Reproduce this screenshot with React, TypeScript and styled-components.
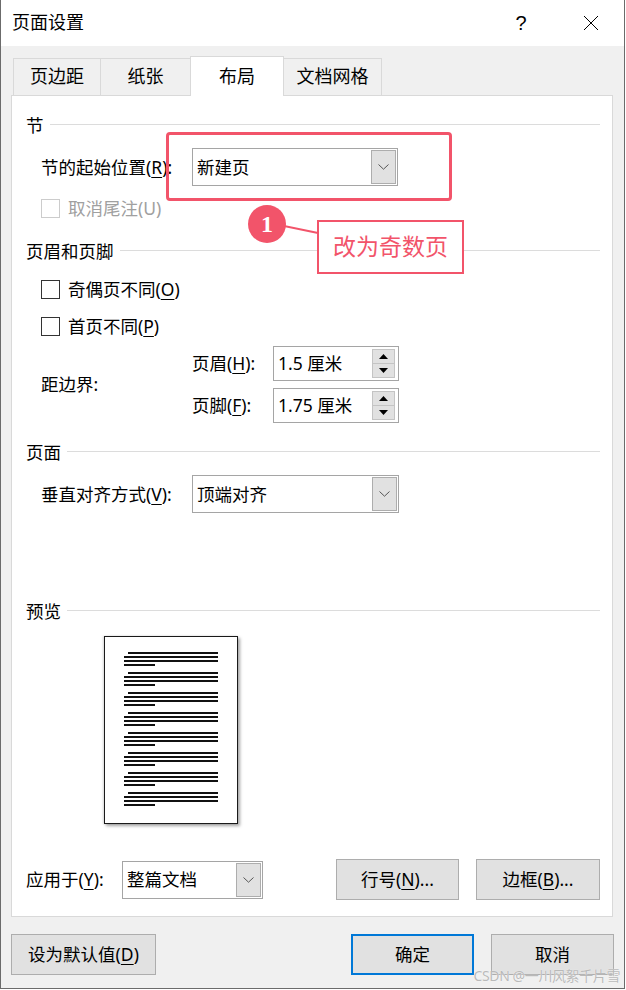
import React from 'react';
import styled, { createGlobalStyle } from 'styled-components';

const GlobalStyle = createGlobalStyle`
  html, body {
    margin: 0;
    padding: 0;
    background: #fff;
  }
  body {
    font-family: "Noto Sans", "Noto Sans CJK SC", sans-serif;
  }
`;

const RED = '#f2546a';

const Window = styled.div`
  position: relative;
  width: 625px;
  height: 989px;
  box-sizing: border-box;
  border: 1px solid #6b6b6b;
  border-top: none;
  background: #f0f0f0;
  color: #000;
  font-size: 17.5px;
  line-height: 1.2;
  display: flex;
  flex-direction: column;
`;

const TitleBar = styled.div`
  height: 46px;
  flex-shrink: 0;
  background: #fff;
  display: flex;
  align-items: center;
  padding-left: 11px;
  padding-right: 10px;
`;

const TitleText = styled.div`
  flex: 1;
  font-size: 18px;
`;

const TitleButton = styled.div`
  width: 46px;
  height: 46px;
  display: flex;
  align-items: center;
  justify-content: center;
  font-size: 20px;
  font-family: "Liberation Sans", sans-serif;
  & + & {
    margin-left: 24px;
  }
`;

const TabStrip = styled.div`
  height: 49px;
  flex-shrink: 0;
  display: flex;
  align-items: flex-end;
  padding-left: 12px;
`;

const Tab = styled.div<{ $w: number; $active?: boolean }>`
  position: relative;
  box-sizing: border-box;
  width: ${(p) => p.$w}px;
  height: ${(p) => (p.$active ? 40 : 37)}px;
  margin-bottom: ${(p) => (p.$active ? -1 : 0)}px;
  z-index: ${(p) => (p.$active ? 2 : 0)};
  border: 1px solid #d9d9d9;
  border-bottom: none;
  background: ${(p) => (p.$active ? '#fff' : '#f0f0f0')};
  display: flex;
  align-items: center;
  justify-content: center;
  font-size: 18px;
  & + & {
    margin-left: -1px;
  }
`;

const Panel = styled.div`
  position: relative;
  box-sizing: border-box;
  height: 822px;
  margin: 0 11px 0 10px;
  border: 1px solid #d9d9d9;
  background: #fff;
  padding: 17px 12px 0 14px;
  display: flex;
  flex-direction: column;
`;

const GroupHeader = styled.div<{ $mt?: number }>`
  height: 24px;
  margin-top: ${(p) => p.$mt ?? 0}px;
  display: flex;
  align-items: center;
  gap: 6px;
  &::after {
    content: '';
    flex: 1;
    height: 1px;
    background: #dcdcdc;
    margin-top: -1px;
  }
`;

const FieldRow = styled.div<{ $mt: number }>`
  display: flex;
  align-items: center;
  margin-top: ${(p) => p.$mt}px;
  padding-left: 15px;
`;

const FieldLabel = styled.div<{ $w: number }>`
  width: ${(p) => p.$w}px;
  flex-shrink: 0;
`;

const Key = styled.span`
  text-decoration: underline;
  text-underline-offset: 3px;
  text-decoration-thickness: 1px;
`;

const Combo = styled.div<{ $w: number }>`
  box-sizing: border-box;
  width: ${(p) => p.$w}px;
  height: 38px;
  border: 1px solid #a5a5a5;
  background: #fff;
  padding: 1px 1px 1px 4px;
  display: flex;
  align-items: stretch;
`;

const ComboValue = styled.div`
  flex: 1;
  display: flex;
  align-items: center;
`;

const ComboArrow = styled.div`
  box-sizing: border-box;
  width: 25px;
  background: #e1e1e1;
  border: 1px solid #adadad;
  display: flex;
  align-items: center;
  justify-content: center;
`;

const CheckRow = styled.div<{ $mt: number }>`
  height: 22px;
  margin-top: ${(p) => p.$mt}px;
  padding-left: 15px;
  display: flex;
  align-items: center;
  gap: 8px;
`;

const CheckBox = styled.div<{ $disabled?: boolean }>`
  box-sizing: border-box;
  width: 19px;
  height: 19px;
  border: 1px solid ${(p) => (p.$disabled ? '#cccccc' : '#333333')};
  background: #fff;
`;

const CheckLabel = styled.span<{ $disabled?: boolean }>`
  color: ${(p) => (p.$disabled ? '#a0a0a0' : '#000')};
`;

const MarginGrid = styled.div`
  margin-top: 9px;
  padding-left: 15px;
  display: grid;
  grid-template-columns: 151px 81px 126px;
  grid-template-rows: 35px 35px;
  row-gap: 7px;
  align-items: center;
`;

const MarginLabel = styled.div`
  grid-row: 1 / span 2;
  align-self: center;
`;

const SpinBox = styled.div`
  box-sizing: border-box;
  height: 35px;
  border: 1px solid #a5a5a5;
  background: #fff;
  padding: 2px 3px 2px 4px;
  display: flex;
`;

const SpinValue = styled.div`
  flex: 1;
  display: flex;
  align-items: center;
`;

const SpinButtons = styled.div`
  width: 23px;
  display: flex;
  flex-direction: column;
`;

const SpinButton = styled.div`
  flex: 1;
  box-sizing: border-box;
  background: #e1e1e1;
  border: 1px solid #c4c4c4;
  display: flex;
  align-items: center;
  justify-content: center;
  & + & {
    border-top: none;
  }
`;

const PreviewPage = styled.div`
  box-sizing: border-box;
  width: 134px;
  height: 188px;
  margin: 13px 0 0 78px;
  border: 1px solid #1a1a1a;
  background: #fff;
  box-shadow: 2px 2px 3px rgba(0, 0, 0, 0.35), -1px 0 2px rgba(0, 0, 0, 0.15);
  padding: 15px 0 0 19px;
  display: flex;
  flex-direction: column;
  gap: 6px;
`;

const PreviewGroup = styled.div`
  display: flex;
  flex-direction: column;
  gap: 2px;
`;

const PreviewLine = styled.div<{ $indent?: number; $w: number }>`
  height: 2px;
  width: ${(p) => p.$w}px;
  margin-left: ${(p) => p.$indent ?? 0}px;
  background: #111;
`;

const ApplyRow = styled.div`
  margin-top: 35px;
  height: 41px;
  display: flex;
  align-items: center;
`;

const ApplyLabel = styled.div`
  width: 96px;
`;

const DialogButton = styled.div<{ $w: number; $primary?: boolean }>`
  box-sizing: border-box;
  width: ${(p) => p.$w}px;
  height: 41px;
  background: #e1e1e1;
  border: ${(p) => (p.$primary ? '2px solid #0078d7' : '1px solid #adadad')};
  display: flex;
  align-items: center;
  justify-content: center;
`;

const ButtonGroup = styled.div`
  margin-left: auto;
  display: flex;
  gap: 17px;
`;

const FooterRow = styled.div`
  margin-top: 17px;
  padding: 0 10px 0 10px;
  display: flex;
  align-items: center;
`;

const FooterRight = styled.div`
  margin-left: auto;
  display: flex;
  gap: 17px;
`;

const RedFrame = styled.div`
  position: absolute;
  left: 165px;
  top: 132px;
  width: 286px;
  height: 69px;
  box-sizing: border-box;
  border: 3px solid ${RED};
  border-radius: 4px;
  pointer-events: none;
`;

const Badge = styled.div`
  position: absolute;
  left: 247px;
  top: 205px;
  width: 38px;
  height: 38px;
  border-radius: 50%;
  background: ${RED};
  color: #fff;
  display: flex;
  align-items: center;
  justify-content: center;
  font-family: "Liberation Serif", "DejaVu Serif", serif;
  font-weight: bold;
  font-size: 24px;
`;

const Connector = styled.svg`
  position: absolute;
  left: 283px;
  top: 224px;
`;

const Callout = styled.div`
  position: absolute;
  left: 316px;
  top: 220px;
  width: 147px;
  height: 54px;
  box-sizing: border-box;
  border: 2px solid ${RED};
  background: #fff;
  color: ${RED};
  font-size: 23px;
  display: flex;
  align-items: center;
  justify-content: center;
`;

const Watermark = styled.div`
  position: absolute;
  right: 4px;
  bottom: 3px;
  font-size: 14px;
  color: #b9b9b9;
  text-shadow: 0 0 1px #fff;
  letter-spacing: -0.4px;
`;

const Chevron = () => (
  <svg width="11" height="6" viewBox="0 0 11 6">
    <path d="M0.5 0.5 L5.5 5.2 L10.5 0.5" fill="none" stroke="#555" strokeWidth="1" />
  </svg>
);

const Arrow = ({ down }: { down?: boolean }) => (
  <svg width="9" height="5" viewBox="0 0 9 5">
    <polygon points={down ? '0,0 9,0 4.5,5' : '0,5 9,5 4.5,0'} fill="#000" />
  </svg>
);

const Select = ({ value, width }: { value: string; width: number }) => (
  <Combo $w={width}>
    <ComboValue>{value}</ComboValue>
    <ComboArrow>
      <Chevron />
    </ComboArrow>
  </Combo>
);

const Spinner = ({ value }: { value: string }) => (
  <SpinBox>
    <SpinValue>{value}</SpinValue>
    <SpinButtons>
      <SpinButton>
        <Arrow />
      </SpinButton>
      <SpinButton>
        <Arrow down />
      </SpinButton>
    </SpinButtons>
  </SpinBox>
);

const previewGroups = Array.from({ length: 8 });

function App() {
  return (
    <>
      <GlobalStyle />
      <Window>
        <TitleBar>
          <TitleText>页面设置</TitleText>
          <TitleButton>?</TitleButton>
          <TitleButton>
            <svg width="16" height="16" viewBox="0 0 16 16">
              <path d="M1 1 L15 15 M15 1 L1 15" stroke="#000" strokeWidth="1" />
            </svg>
          </TitleButton>
        </TitleBar>

        <TabStrip>
          <Tab $w={88}>页边距</Tab>
          <Tab $w={91}>纸张</Tab>
          <Tab $w={94} $active>
            布局
          </Tab>
          <Tab $w={99}>文档网格</Tab>
        </TabStrip>

        <Panel>
          <GroupHeader>节</GroupHeader>
          <FieldRow $mt={11}>
            <FieldLabel $w={151}>
              节的起始位置(<Key>R</Key>):
            </FieldLabel>
            <Select value="新建页" width={206} />
          </FieldRow>
          <CheckRow $mt={11}>
            <CheckBox $disabled />
            <CheckLabel $disabled>取消尾注(U)</CheckLabel>
          </CheckRow>

          <GroupHeader $mt={20}>页眉和页脚</GroupHeader>
          <CheckRow $mt={15}>
            <CheckBox />
            <CheckLabel>
              奇偶页不同(<Key>O</Key>)
            </CheckLabel>
          </CheckRow>
          <CheckRow $mt={15}>
            <CheckBox />
            <CheckLabel>
              首页不同(<Key>P</Key>)
            </CheckLabel>
          </CheckRow>
          <MarginGrid>
            <MarginLabel>距边界:</MarginLabel>
            <div>
              页眉(<Key>H</Key>):
            </div>
            <Spinner value="1.5 厘米" />
            <div style={{ gridColumn: 2 }}>
              页脚(<Key>F</Key>):
            </div>
            <Spinner value="1.75 厘米" />
          </MarginGrid>

          <GroupHeader $mt={17}>页面</GroupHeader>
          <FieldRow $mt={11}>
            <FieldLabel $w={151}>
              垂直对齐方式(<Key>V</Key>):
            </FieldLabel>
            <Select value="顶端对齐" width={207} />
          </FieldRow>

          <GroupHeader $mt={86}>预览</GroupHeader>
          <PreviewPage>
            {previewGroups.map((_, i) => (
              <PreviewGroup key={i}>
                <PreviewLine $indent={4} $w={90} />
                <PreviewLine $w={94} />
                <PreviewLine $w={94} />
                <PreviewLine $w={31} />
              </PreviewGroup>
            ))}
          </PreviewPage>

          <ApplyRow>
            <ApplyLabel>
              应用于(<Key>Y</Key>):
            </ApplyLabel>
            <Select value="整篇文档" width={141} />
            <ButtonGroup>
              <DialogButton $w={123}>
                行号(<Key>N</Key>)...
              </DialogButton>
              <DialogButton $w={124}>
                边框(<Key>B</Key>)...
              </DialogButton>
            </ButtonGroup>
          </ApplyRow>
        </Panel>

        <FooterRow>
          <DialogButton $w={145}>
            设为默认值(<Key>D</Key>)
          </DialogButton>
          <FooterRight>
            <DialogButton $w={123} $primary>
              确定
            </DialogButton>
            <DialogButton $w={123}>取消</DialogButton>
          </FooterRight>
        </FooterRow>

        <RedFrame />
        <Connector width="36" height="12" viewBox="0 0 36 12">
          <line x1="0" y1="2" x2="34" y2="9" stroke={RED} strokeWidth="2" />
        </Connector>
        <Badge>1</Badge>
        <Callout>改为奇数页</Callout>
        <Watermark>CSDN @一川风絮千片雪</Watermark>
      </Window>
    </>
  );
}

export default App;
